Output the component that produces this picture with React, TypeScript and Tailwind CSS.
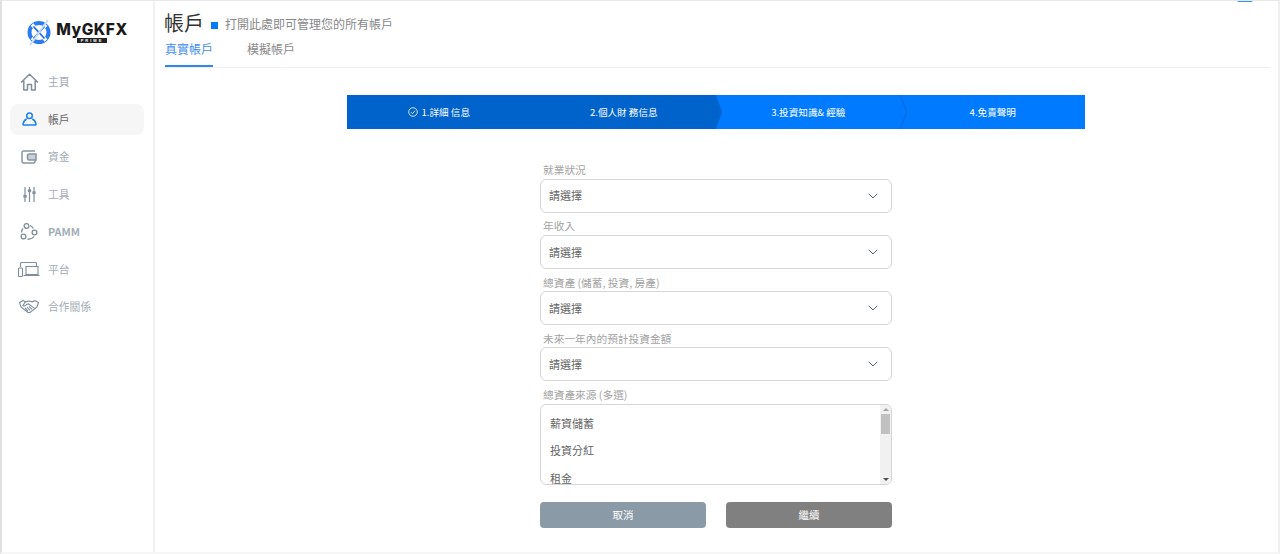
import { ChevronDown } from 'lucide-react';

const NAV = [
  { label: '主頁', icon: <HomeIcon /> },
  { label: '帳戶', icon: <UserIcon />, active: true },
  { label: '資金', icon: <WalletIcon /> },
  { label: '工具', icon: <ToolsIcon /> },
  { label: 'PAMM', icon: <PammIcon />, bold: true },
  { label: '平台', icon: <DevicesIcon /> },
  { label: '合作關係', icon: <HandshakeIcon /> },
];

const FIELDS = ['就業狀況', '年收入', '總資產 (儲蓄, 投資, 房產)', '未來一年內的預計投資金額'];
const STEPS = ['1.詳細 信息', '2.個人財 務信息', '3.投資知識& 經驗', '4.免責聲明'];
const SOURCES = ['薪資儲蓄', '投資分紅', '租金'];

function HomeIcon() {
  return (
    <svg width="19" height="18" viewBox="0 0 19 18" fill="none" stroke="#7f8e9b" strokeWidth="1.5" strokeLinejoin="round">
      <path d="M1 9.500 9.500 1.200 18 9.500M3.800 7.500v9.500h3.700v-5.500h4v5.500h3.700V7.500" />
    </svg>
  );
}

function UserIcon() {
  return (
    <svg width="15" height="14" viewBox="0 0 16 15" fill="none" stroke="#1a82f0" strokeWidth="1.6">
      <circle cx="8" cy="4" r="3" />
      <path d="M5 7.500C3 8.300 1.500 10.500 1 13c0 .7.300 1 .8 1h12.400c.5 0 .8-.3.8-1-.5-2.500-2-4.700-4-5.500" />
    </svg>
  );
}

function WalletIcon() {
  return (
    <svg width="16" height="14" viewBox="0 0 16 14" fill="none" stroke="#8795a1" strokeWidth="1.500">
      <path d="M14 1H2.500A1.500 1.500 0 0 0 1 2.500v9A1.500 1.500 0 0 0 2.500 13h10a1.500 1.500 0 0 0 1.500-1.500V10" />
      <path d="M15 4H8A1.500 1.500 0 0 0 6.500 5.500v3A1.500 1.500 0 0 0 8 10h7z" fill="#c9d1d8" />
    </svg>
  );
}

function ToolsIcon() {
  return (
    <svg width="13" height="15" viewBox="0 0 13 15" fill="#7f8e9b" stroke="#7f8e9b" strokeWidth="1.200">
      <path d="M2 0v15M6.500 0v15M11 0v15" fill="none" />
      <rect x="1" y="8.500" width="2" height="1.500" />
      <rect x="5.500" y="3" width="2" height="1.500" />
      <rect x="10" y="5" width="2" height="1.500" />
    </svg>
  );
}

function PammIcon() {
  return (
    <svg width="18" height="17" viewBox="0 0 18 17" fill="none" stroke="#7f8e9b" strokeWidth="1.300">
      <circle cx="6.500" cy="3" r="2.400" />
      <circle cx="3.500" cy="13.500" r="2.400" />
      <circle cx="14.500" cy="9.500" r="2.400" />
      <path d="M10 2.500c1.500.5 2.500 1.500 3.200 3M14 13.500c-1 1.500-4 3-6.500 2.700M1.800 9.500c-.3-1.500.2-3 1.200-4" />
    </svg>
  );
}

function DevicesIcon() {
  return (
    <svg width="22" height="15" viewBox="0 0 22 15" fill="none" stroke="#7f8e9b" strokeWidth="1.100">
      <path d="M2.500 5V1.500A1 1 0 0 1 3.500.5h14a1 1 0 0 1 1 1V4" />
      <rect x="8" y="4.500" width="12" height="8" />
      <path d="M5.500 13.500H21.500" />
      <rect x="0.500" y="6" width="4" height="8.500" rx="0.800" />
    </svg>
  );
}

function HandshakeIcon() {
  return (
    <svg width="20" height="13" viewBox="0 0 20 13" fill="none" stroke="#7f8e9b" strokeWidth="1.100">
      <path d="M.5 2.500 4 .5l2.500 1.300L10 1l3.500.8L16 .5l3.500 2-1.500 4.500-7 5.500-2 0L2 7z" />
      <path d="M6.500 1.800 4 5.500c1 .8 2.500.5 3.500-1l2-.6 6 4.500M6 8l3 3M8 7l3 3.300M10 6.300l3 3" />
    </svg>
  );
}

function Logo() {
  return (
    <div className="flex items-center gap-[5px]">
      <svg width="24" height="27" viewBox="0 0 24 27" fill="none">
        <circle cx="12" cy="13.500" r="9.500" stroke="#2b7cf0" strokeWidth="4" />
        <path d="M5 5.500 19 21.500M19 5.500 5 21.500" stroke="white" strokeWidth="3.500" />
        <path d="M6.500 7.500 17.500 19.500M17.500 7.500 6.500 19.500" stroke="#1f6fe6" strokeWidth="1.800" />
        <path d="M3 26 21 1" stroke="#c5d8f7" strokeWidth="1.800" />
      </svg>
      <div className="flex flex-col items-center">
        <span className="text-[15.500px] leading-[15px] font-extrabold tracking-[0.5px] text-[#1a1a1a] font-['Inter','Liberation_Sans',sans-serif]">MyGKFX</span>
        <span className="mt-px bg-[#222] text-white h-[5px] w-[30px] text-[4px] leading-[5px] tracking-[2px] text-center font-bold font-['Liberation_Sans',sans-serif]">PRIME</span>
      </div>
    </div>
  );
}

function Sidebar() {
  return (
    <aside className="w-[153px] shrink-0 border-r-2 border-[#f0f0f2] pl-2 flex flex-col">
      <div className="h-[43px] mt-[10px] flex justify-center pr-[8px]">
        <Logo />
      </div>
      <nav className="mt-[12px] flex flex-col">
        {NAV.map((item) => (
          <div
            key={item.label}
            className={
              'h-[31px] mb-[6.500px] w-[134px] rounded-lg flex items-center ' +
              (item.active ? 'bg-[#f6f6f6]' : '')
            }
          >
            <span className="w-[38px] shrink-0 flex justify-center">{item.icon}</span>
            <span
              className={
                'text-[10.800px] ' +
                (item.bold ? 'font-bold ' : '') +
                (item.active ? 'text-[#666]' : 'text-[#a4adb5]')
              }
            >
              {item.label}
            </span>
          </div>
        ))}
      </nav>
    </aside>
  );
}

function Stepper() {
  return (
    <div className="relative flex h-[34px] w-[738px] bg-[#007bff] text-white text-[9.600px]">
      <div className="absolute left-0 top-0 h-full w-[375px] bg-[#0063cc]" style={{ clipPath: 'polygon(0 0, 369px 0, 375px 50%, 369px 100%, 0 100%)' }} />
      <svg className="absolute left-[553px] top-0" width="8" height="34" viewBox="0 0 8 34" fill="none">
        <path d="M.500 0 6.500 17 .500 34" stroke="#0063cc" strokeWidth="0.800" />
      </svg>
      {STEPS.map((step, i) => (
        <div key={step} className="relative flex-1 flex items-center justify-center gap-[3px]">
          {i === 0 && (
            <svg width="10" height="10" viewBox="0 0 10 10" fill="none" stroke="white" strokeWidth="0.800">
              <circle cx="5" cy="5" r="4.300" />
              <path d="M3 5.200 4.500 6.700 7 3.700" />
            </svg>
          )}
          {step}
        </div>
      ))}
    </div>
  );
}

function SelectField({ label }: { label: string }) {
  return (
    <div className="h-[56.250px]">
      <label className="block h-[16.500px] pl-[3px] text-[10.700px] leading-[16px] text-[#a3a3a3]">{label}</label>
      <div className="h-[34px] rounded-md border border-[#d5d5d5] pl-2 pr-[10px] flex items-center justify-between">
        <span className="text-[11px] text-[#666]">請選擇</span>
        <ChevronDown size={16} strokeWidth={1.500} className="text-[#5f6d79]" />
      </div>
    </div>
  );
}

function SourceList() {
  return (
    <div>
      <label className="block h-[16.500px] pl-[3px] text-[10.700px] leading-[16px] text-[#a3a3a3]">總資產來源 (多選)</label>
      <div className="h-[81px] rounded-md border border-[#d5d5d5] flex overflow-hidden">
        <div className="flex-1 overflow-hidden pl-[9px] pt-[8px]">
          {SOURCES.map((s) => (
            <div key={s} className="h-[27.500px] text-[11px] leading-[20px] text-[#666]">{s}</div>
          ))}
        </div>
        <div className="w-[11px] bg-[#f1f1f1] flex flex-col items-center">
          <div className="mt-[3px] w-0 h-0 border-x-[3px] border-x-transparent border-b-[3px] border-b-[#a3a3a3]" />
          <div className="mt-[3px] h-[20px] w-[9px] bg-[#c1c1c1]" />
          <div className="mt-auto mb-[3px] w-0 h-0 border-x-[3px] border-x-transparent border-t-[3px] border-t-[#505050]" />
        </div>
      </div>
    </div>
  );
}

export default function App() {
  return (
    <div className="relative w-[1280px] h-[554px] overflow-hidden flex bg-white border-t border-[#e8e8ec] border-l-2 border-l-[#e0e0e0] border-r-2 border-r-[#f0f0f0] border-b-2 border-b-[#f6f6f6] font-['Noto_Sans_CJK_TC','Liberation_Sans',sans-serif]">
      <Sidebar />
      <main className="flex-1 flex flex-col min-w-0">
        <header className="ml-[10px] mr-[8px] h-[67px] border-b border-[#eeeeee] flex flex-col">
          <div className="flex items-center h-[40px] pt-[4px]">
            <span className="-ml-px text-[20px] leading-[28px] text-[#333]">帳戶</span>
            <span className="ml-[7px] mt-[4px] w-[7px] h-[7px] bg-[#007bff]" />
            <span className="ml-[7px] mt-[2px] text-[12px] text-[#888]">打開此處即可管理您的所有帳戶</span>
          </div>
          <div className="flex text-[12px] h-[26px]">
            <div className="w-[48px] text-center text-[#3f8ef0] border-b-2 border-[#2f86f2] leading-[16px]">真實帳戶</div>
            <div className="ml-[34px] text-[#8a8a8a] leading-[16px]">模擬帳戶</div>
          </div>
        </header>
        <div className="mt-[27px] ml-[192px]">
          <Stepper />
        </div>
        <form className="ml-[385px] mt-[33px] w-[352px]">
          {FIELDS.map((f) => (
            <SelectField key={f} label={f} />
          ))}
          <SourceList />
          <div className="mt-[17px] flex justify-between">
            <button type="button" className="w-[166px] h-[26px] rounded bg-[#8a9aa6] text-white text-[10.500px]">取消</button>
            <button type="button" className="w-[166px] h-[26px] rounded bg-[#808080] text-white text-[10.500px]">繼續</button>
          </div>
        </form>
      </main>
      <div className="absolute -top-px left-[1235px] h-[2px] w-[16px] rounded-b-full bg-[#3b8ff0]" />
    </div>
  );
}
